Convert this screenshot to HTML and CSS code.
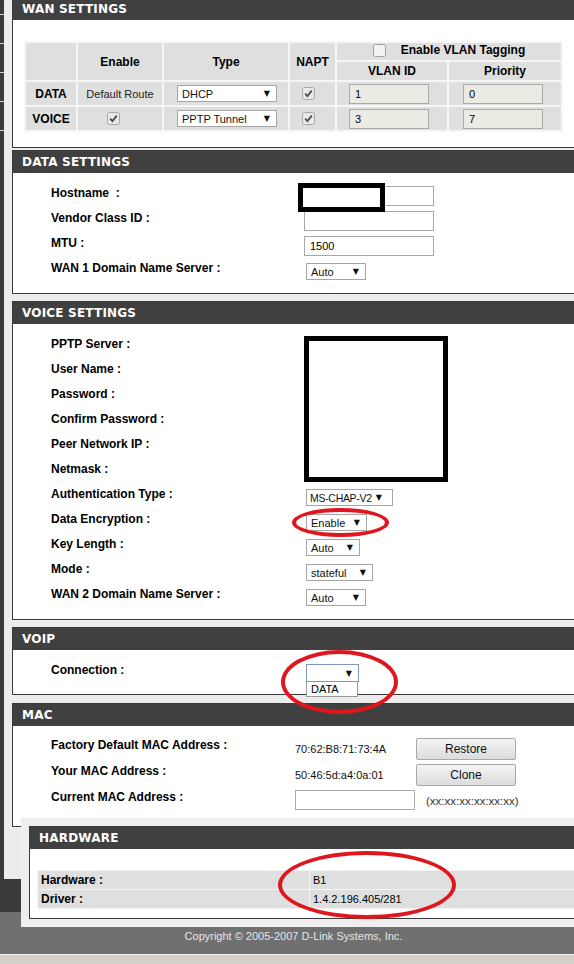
FILE: index.html
```html
<!DOCTYPE html>
<html lang="en">
<head>
<meta charset="utf-8">
<title>WAN Settings</title>
<link rel="stylesheet" href="styles.css">
</head>
<body>
<div class="page">
  <div class="main">
    <div class="leftnav"><span></span><span></span><span></span><span></span><span></span></div>
    <div class="content">

      <section class="panel">
        <h2 class="ph">WAN SETTINGS</h2>
        <div class="pb wanbody">
          <table class="wt">
            <tr class="r1">
              <th rowspan="2" class="c1"></th>
              <th rowspan="2" class="c2">Enable</th>
              <th rowspan="2" class="c3">Type</th>
              <th rowspan="2" class="c4">NAPT</th>
              <th colspan="2" class="vlan"><span class="cbwrap"><svg class="cb" width="13" height="13" viewBox="0 0 13 13"><rect x="0.5" y="0.5" width="12" height="12" rx="2" fill="#f3f3f3" stroke="#a0a0a0"/></svg>Enable VLAN Tagging</span></th>
            </tr>
            <tr class="r2">
              <th class="c5">VLAN ID</th>
              <th class="c6">Priority</th>
            </tr>
            <tr class="r3">
              <th>DATA</th>
              <td class="tc">Default Route</td>
              <td class="ptype"><span class="sel w100">DHCP</span></td>
              <td class="pnapt"><svg class="cb" width="13" height="13" viewBox="0 0 13 13"><rect x="0.5" y="0.5" width="12" height="12" rx="2" fill="#e9e9e9" stroke="#a8a8a8"/><path d="M3.2 6.6 L5.4 9 L9.8 3.6" fill="none" stroke="#4a4a4a" stroke-width="1.8"/></svg></td>
              <td class="pvlan"><span class="vin">1</span></td>
              <td class="pprio"><span class="vin">0</span></td>
            </tr>
            <tr class="r3">
              <th>VOICE</th>
              <td class="penable"><svg class="cb" width="13" height="13" viewBox="0 0 13 13"><rect x="0.5" y="0.5" width="12" height="12" rx="2" fill="#e9e9e9" stroke="#a8a8a8"/><path d="M3.2 6.6 L5.4 9 L9.8 3.6" fill="none" stroke="#4a4a4a" stroke-width="1.8"/></svg></td>
              <td class="ptype"><span class="sel w100">PPTP Tunnel</span></td>
              <td class="pnapt"><svg class="cb" width="13" height="13" viewBox="0 0 13 13"><rect x="0.5" y="0.5" width="12" height="12" rx="2" fill="#e9e9e9" stroke="#a8a8a8"/><path d="M3.2 6.6 L5.4 9 L9.8 3.6" fill="none" stroke="#4a4a4a" stroke-width="1.8"/></svg></td>
              <td class="pvlan"><span class="vin">3</span></td>
              <td class="pprio"><span class="vin">7</span></td>
            </tr>
          </table>
        </div>
      </section>

      <section class="panel">
        <h2 class="ph">DATA SETTINGS</h2>
        <div class="pb form fdata">
          <div class="row"><span class="lbl">Hostname&nbsp; :</span><span class="txt"></span></div>
          <div class="row"><span class="lbl">Vendor Class ID :</span><span class="txt"></span></div>
          <div class="row"><span class="lbl">MTU :</span><span class="txt">1500</span></div>
          <div class="row"><span class="lbl">WAN 1 Domain Name Server :</span><span class="sel w60">Auto</span></div>
        </div>
      </section>

      <section class="panel">
        <h2 class="ph">VOICE SETTINGS</h2>
        <div class="pb form fvoice">
          <div class="row"><span class="lbl">PPTP Server :</span></div>
          <div class="row"><span class="lbl">User Name :</span></div>
          <div class="row"><span class="lbl">Password :</span></div>
          <div class="row"><span class="lbl">Confirm Password :</span></div>
          <div class="row"><span class="lbl">Peer Network IP :</span></div>
          <div class="row"><span class="lbl">Netmask :</span></div>
          <div class="row"><span class="lbl">Authentication Type :</span><span class="sel w87 tight">MS-CHAP-V2</span></div>
          <div class="row"><span class="lbl">Data Encryption :</span><span class="sel w61">Enable</span></div>
          <div class="row"><span class="lbl">Key Length :</span><span class="sel w54">Auto</span></div>
          <div class="row"><span class="lbl">Mode :</span><span class="sel w67">stateful</span></div>
          <div class="row"><span class="lbl">WAN 2 Domain Name Server :</span><span class="sel w60">Auto</span></div>
        </div>
      </section>

      <section class="panel">
        <h2 class="ph">VOIP</h2>
        <div class="pb form fvoip">
          <div class="row"><span class="lbl">Connection :</span>
            <span class="selwrap"><span class="sel open w53"></span><span class="dropdown">DATA</span></span>
          </div>
        </div>
      </section>

      <section class="panel">
        <h2 class="ph">MAC</h2>
        <div class="pb form fmac">
          <div class="row"><span class="lbl">Factory Default MAC Address :</span><span class="val">70:62:B8:71:73:4A</span><span class="btn">Restore</span></div>
          <div class="row"><span class="lbl">Your MAC Address :</span><span class="val">50:46:5d:a4:0a:01</span><span class="btn">Clone</span></div>
          <div class="row"><span class="lbl">Current MAC Address :</span><span class="txt w120"></span><span class="hint">(xx:xx:xx:xx:xx:xx)</span></div>
        </div>
      </section>

    </div>
  </div>
  <div class="band"></div>
  <footer class="footer">Copyright © 2005-2007 D-Link Systems, Inc.</footer>
  <div class="bottom"></div>

  <div class="hwwrap">
    <section class="hw">
      <h2 class="ph">HARDWARE</h2>
      <div class="hwbody">
        <table class="hwt">
          <tr><th>Hardware :</th><td>B1</td></tr>
          <tr><th>Driver :</th><td>1.4.2.196.405/281</td></tr>
        </table>
      </div>
    </section>
  </div>

  <div class="redact r-host"></div>
  <div class="redact r-voice"></div>

  <div class="ring ring1"></div>
  <div class="ring ring2"></div>
  <div class="ring ring3"></div>
</div>
</body>
</html>
```

FILE: styles.css
```css
* { box-sizing: border-box; }
html, body { margin: 0; padding: 0; }
body {
  width: 574px;
  height: 964px;
  overflow: hidden;
  background: #ececec;
  font-family: "Liberation Sans", Arial, sans-serif;
  font-size: 11px;
  color: #000;
}
.page { position: relative; width: 574px; }

.main { display: flex; align-items: stretch; }
.leftnav {
  width: 4px;
  flex: none;
  background: #3a3a3a;
  display: flex;
  flex-direction: column;
}
.leftnav span { display: block; height: 29px; border-bottom: 1px solid #d6d6d6; }
.leftnav span:first-child { height: 15px; }

.content {
  flex: none;
  width: 620px;
  margin-left: 8px;
  margin-top: -3px;
  padding-bottom: 45px;
}

.panel {
  border: 1px solid #3a3a3a;
  background: #fff;
  margin-bottom: 7px;
}
.panel:first-child { margin-bottom: 2px; }
.panel:nth-child(3) { margin-bottom: 7px; }
.panel:nth-child(4) { margin-bottom: 8px; }

.ph {
  margin: 0;
  height: 22px;
  line-height: 22px;
  background: #404040;
  color: #fff;
  font-family: "DejaVu Sans", Verdana, sans-serif;
  font-weight: bold;
  font-size: 12px;
  letter-spacing: 0.2px;
  padding-left: 9px;
}

/* WAN table */
.wanbody { padding: 21px 0 15px 11px; }
.wt {
  border-collapse: separate;
  border-spacing: 2px;
  background: #f6f6f6;
}
.wt th, .wt td {
  background: #dfdfdf;
  padding: 0;
  text-align: center;
  vertical-align: middle;
}
.wt th { font-weight: bold; font-size: 12px; }
.wt .c1 { width: 50px; }
.wt .c2 { width: 84px; }
.wt .c3 { width: 124px; }
.wt .c4 { width: 45px; }
.wt .c5 { width: 110px; }
.wt .c6 { width: 112px; }
.wt .r1 th { height: 17px; }
.wt .r2 th { height: 18px; }
.wt .r3 th, .wt .r3 td { height: 23px; }
.wt .tc { font-size: 11px; color: #222; }
.cbwrap { display: inline-flex; align-items: center; gap: 15px; }
.cb { display: block; }
.wt .ptype { text-align: left; padding-left: 13px; }
.wt .pnapt { text-align: left; padding-left: 12px; }
.wt .penable { text-align: left; padding-left: 29px; }
.wt .pvlan { text-align: left; padding-left: 12px; }
.wt .pprio { text-align: left; padding-left: 14px; }
.vin {
  display: block;
  width: 80px;
  height: 20px;
  border: 1px solid #a9a9a9;
  background: #ebebe4;
  font-size: 11px;
  line-height: 18px;
  padding-left: 5px;
  text-align: left;
}

/* selects */
.sel {
  display: flex;
  align-items: center;
  height: 17px;
  border: 1px solid #a6a6a6;
  background: #fff;
  font-size: 11px;
  color: #111;
  padding: 0 6px 0 4px;
}
.sel::after {
  content: "\25BC";
  font-family: "DejaVu Sans", sans-serif;
  font-size: 8px;
  margin-left: auto;
}
.sel.tight { font-size: 10.5px; letter-spacing: -0.3px; padding-left: 3px; }
.sel.tight::after { margin-left: 4px; }
.w100 { width: 100px; }
.w60 { width: 60px; }
.w87 { width: 87px; }
.w61 { width: 61px; }
.w54 { width: 54px; }
.w67 { width: 67px; }
.w53 { width: 53px; }

/* forms */
.form .row {
  display: grid;
  grid-template-columns: 253px auto;
  align-items: start;
  justify-items: start;
  height: 25px;
}
.lbl {
  font-weight: bold;
  font-size: 12px;
  line-height: 16px;
  padding-top: 4px;
  white-space: nowrap;
}
.form .sel { margin-top: 7px; margin-left: 2px; }
.txt {
  display: block;
  width: 130px;
  height: 20px;
  margin-top: 5px;
  border: 1px solid #a9a9a9;
  background: #fff;
  font-size: 11px;
  line-height: 18px;
  padding-left: 5px;
}
.fdata { padding: 8px 0 12px 38px; }
.fvoice { padding: 8px 0 12px 38px; }
.fvoip { padding: 8px 0 11px 38px; }

.selwrap { position: relative; display: block; margin-top: 6px; margin-left: 2px; }
.form .selwrap .sel { margin: 0; }
.sel.open { height: 18px; border-color: #7f96bd; }
.dropdown {
  position: absolute;
  left: 0;
  top: 18px;
  width: 52px;
  height: 15px;
  border: 1px solid #9a9a9a;
  border-top: 0;
  background: #fff;
  font-size: 11px;
  line-height: 14px;
  padding-left: 4px;
  z-index: 2;
}

.fmac { padding: 7px 0 15px 38px; }
.fmac .row { grid-template-columns: 244px 121px auto; height: 26px; }
.val { font-size: 11px; line-height: 13px; padding-top: 10px; color: #111; }
.btn {
  display: flex;
  align-items: center;
  justify-content: center;
  width: 100px;
  height: 22px;
  margin-top: 5px;
  border: 1px solid #a8a8a8;
  border-radius: 2px;
  background: linear-gradient(#f4f4f4, #dcdcdc);
  font-size: 12px;
  color: #111;
}
.txt.w120 { width: 120px; }
.hint { font-size: 11.5px; color: #333; padding-top: 10px; margin-left: 10px; }

/* bottom area */
.band { height: 33px; background: #3a3a3a; }
.footer {
  height: 42px;
  background: #707070;
  color: #e6e6e6;
  font-size: 11px;
  text-align: center;
  padding: 18px 0 0 13px;
  line-height: 13px;
}
.bottom { height: 20px; background: #d4d0c8; border-top: 1px solid #f2f2f2; }

/* hardware overlay (pasted screenshot) */
.hwwrap {
  position: absolute;
  left: 21px;
  top: 818px;
  width: 580px;
  height: 109px;
  background: #eeeeee;
  padding: 8px 0 0 8px;
}
.hw { border: 1px solid #3a3a3a; background: #fff; height: 93px; }
.hw .ph { padding-left: 9px; }
.hwbody { padding: 21px 0 0 7px; }
.hwt { border-collapse: separate; border-spacing: 1px; background: #f4f4f4; width: 560px; }
.hwt th, .hwt td { background: #dfdfdf; height: 18px; padding: 0 0 0 3px; text-align: left; }
.hwt th { width: 271px; font-weight: bold; font-size: 12px; }
.hwt td { font-size: 11px; }

/* annotations drawn on the screenshot */
.redact { position: absolute; border: 5px solid #000; background: #fff; }
.r-host { left: 298px; top: 183px; width: 87px; height: 29px; }
.r-voice { left: 304px; top: 336px; width: 144px; height: 146px; }

.ring { position: absolute; border: 4px solid #e0161f; border-radius: 50%; }
.ring1 { left: 292px; top: 508px; width: 97px; height: 29px; }
.ring2 { left: 281px; top: 650px; width: 117px; height: 64px; }
.ring3 { left: 278px; top: 851px; width: 178px; height: 68px; }
```
